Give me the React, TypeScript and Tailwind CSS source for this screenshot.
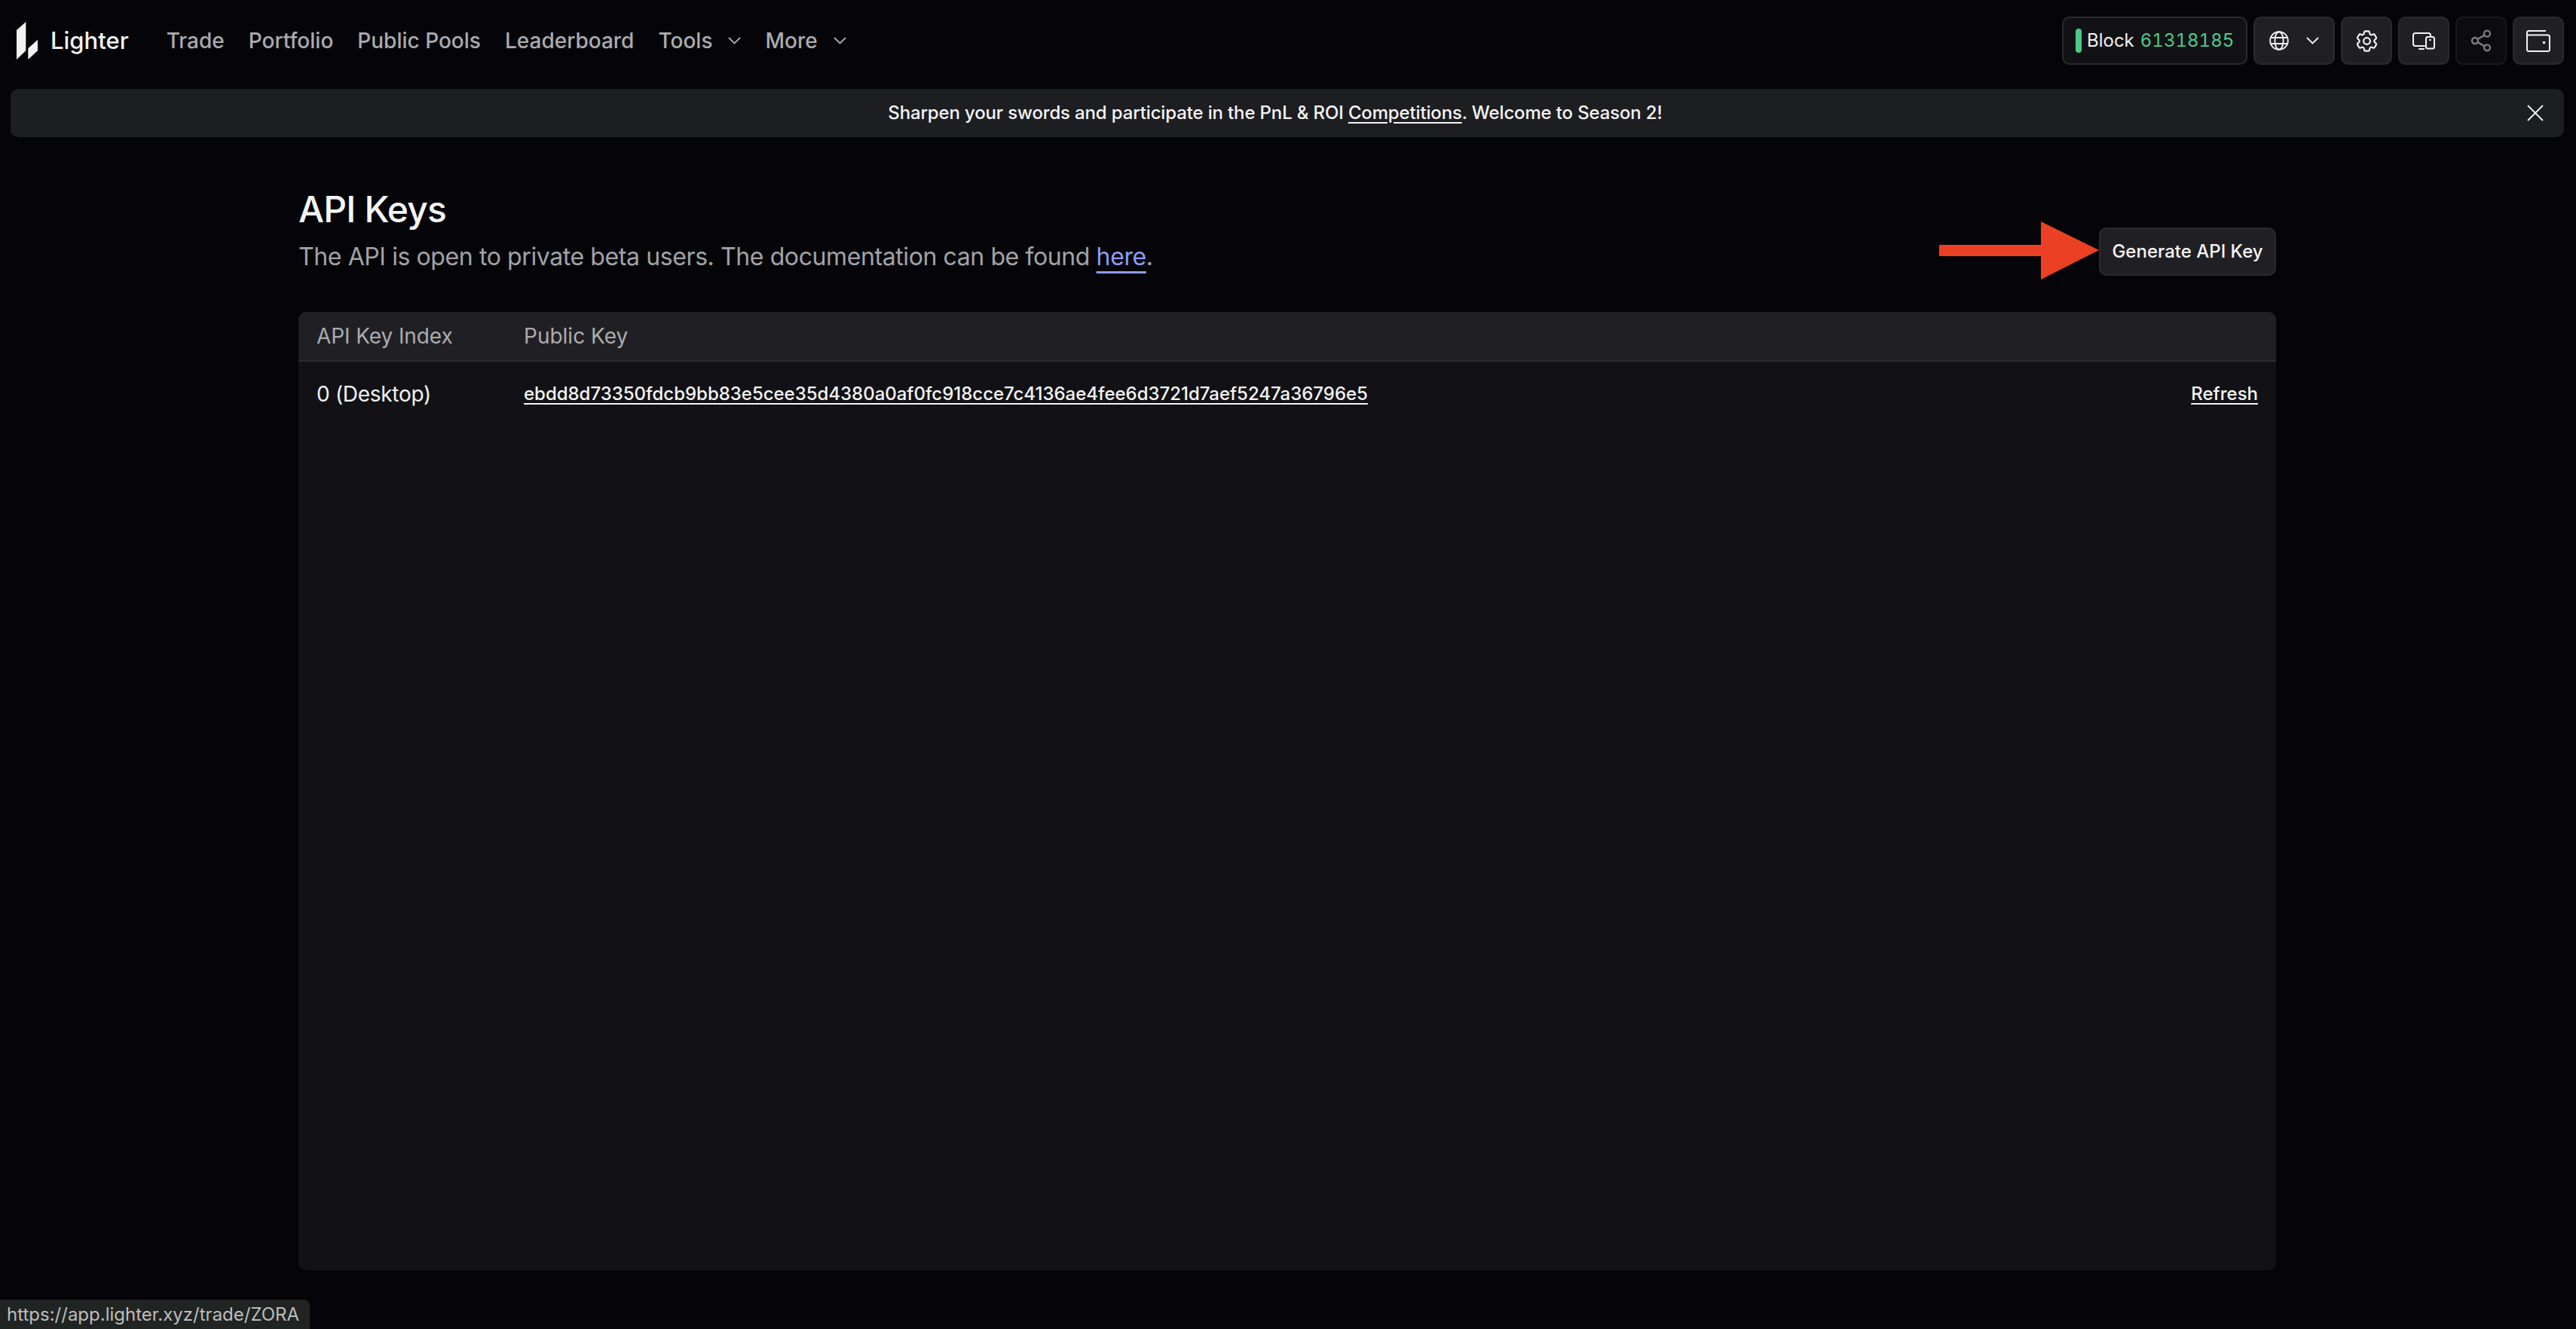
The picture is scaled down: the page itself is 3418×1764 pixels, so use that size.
import React from 'react'
import { Share2 } from 'lucide-react'
import { HiOutlineCog6Tooth } from 'react-icons/hi2'

function Logo() {
  return (
    <svg width="28" height="50" viewBox="0 0 28 50" fill="#f2f2f2">
      <polygon points="0,11 12.3,0 12.3,38.3 0,50" />
      <polygon points="15.3,35.3 28,23.7 28,38.3 15.3,50" />
    </svg>
  )
}

function Chevron({ className }: { className?: string }) {
  return (
    <svg width="17" height="10" viewBox="0 0 17 10" fill="none" stroke="currentColor" strokeWidth="1.8" className={className}>
      <path d="M1 1l7.5 7.5L16 1" />
    </svg>
  )
}

function NavLink({ label, menu }: { label: string; menu?: boolean }) {
  return (
    <a className="flex items-center gap-[21px] text-[28px] leading-10 font-medium text-[#ababaf]">
      {label}
      {menu && <Chevron />}
    </a>
  )
}

function IconButton({ children, dim }: { children: React.ReactNode; dim?: boolean }) {
  return (
    <button className={`flex h-16 w-[68px] items-center justify-center rounded-[10px] border-2 ${dim ? 'border-[#1a1a1e] bg-[#0c0c10]' : 'border-[#2a2a2f] bg-[#202024]'}`}>
      {children}
    </button>
  )
}

function Header() {
  return (
    <header className="flex h-16 items-center justify-between pl-[22px] pr-4">
      <div className="flex items-center">
        <Logo />
        <span className="ml-[17px] text-[31px] leading-10 font-medium text-[#f2f2f2]">Lighter</span>
        <nav className="ml-[50px] flex items-center gap-[32px]">
          <NavLink label="Trade" />
          <NavLink label="Portfolio" />
          <NavLink label="Public Pools" />
          <NavLink label="Leaderboard" />
          <NavLink label="Tools" menu />
          <NavLink label="More" menu />
        </nav>
      </div>
      <div className="flex items-center gap-2">
        <div className="flex h-16 w-[246px] items-center rounded-[10px] border-2 border-[#2a2a2f] bg-[#121216] pl-4">
          <span className="h-8 w-2 rounded-full bg-[#4fc98a]" />
          <span className="ml-[7px] text-2xl text-[#f2f2f2]">Block</span>
          <span className="ml-2 text-2xl text-[#4fc98a] tabular-nums">61318185</span>
        </div>
        <button className="flex h-16 w-[108px] items-center rounded-[10px] border-2 border-[#2a2a2f] bg-[#202024] pl-[19px] text-[#f2f2f2]">
          <svg width="26" height="26" viewBox="0 0 26 26" fill="none" stroke="currentColor" strokeWidth="1.9">
            <circle cx="13" cy="13" r="11.8" />
            <ellipse cx="13" cy="13" rx="5.6" ry="11.8" />
            <path d="M2.5 9h21M2.5 17h21" />
          </svg>
          <Chevron className="ml-[23px]" />
        </button>
        <IconButton>
          <HiOutlineCog6Tooth size={35} color="#f2f2f2" />
        </IconButton>
        <IconButton>
          <svg width="30" height="23" viewBox="0 0 30 23" fill="none" stroke="#f2f2f2" strokeWidth="2" strokeLinecap="round">
            <path d="M24 5V4a3 3 0 0 0-3-3H4a3 3 0 0 0-3 3v11a3 3 0 0 0 3 3h12" />
            <rect x="18" y="6" width="11" height="15.5" rx="2.5" />
            <path d="M9 22h6M23 10h1" />
          </svg>
        </IconButton>
        <IconButton dim>
          <Share2 size={32} strokeWidth={1.75} color="#808084" />
        </IconButton>
        <IconButton>
          <svg width="32" height="29" viewBox="0 0 32 29" fill="none" stroke="#f2f2f2" strokeWidth="2">
            <path d="M1 8V3.5Q1 1 3.5 1H26" />
            <rect x="1" y="6.5" width="30" height="21.5" rx="2.5" />
            <circle cx="23.5" cy="16.5" r="1.8" fill="#f2f2f2" stroke="none" />
          </svg>
        </IconButton>
      </div>
    </header>
  )
}

function Banner() {
  return (
    <div className="mt-8 ml-[14px] mr-4 flex h-16 items-center rounded-[10px] bg-[#1d1e22] pr-[22px]">
      <p className="flex-1 pl-[22px] text-center text-2xl font-medium tracking-[-0.15px] text-[#f5f5f5]">
        Sharpen your swords and participate in the PnL &amp; ROI <a className="underline underline-offset-4">Competitions</a>. Welcome to Season 2!
      </p>
      <svg width="32" height="32" viewBox="0 0 32 32" fill="none" stroke="#f2f2f2" strokeWidth="1.8">
        <path d="M6 6l20 20M26 6L6 26" />
      </svg>
    </div>
  )
}

function ArrowToButton() {
  return (
    <svg width="212" height="77" viewBox="0 0 212 77" className="absolute right-full top-[-8px]" fill="#eb4024">
      <path d="M0 31H135V0L212 38L135 77V46H0z" />
    </svg>
  )
}

function KeysTable() {
  return (
    <div className="mt-12 h-[1272px] overflow-hidden rounded-[10px] bg-[#121216]">
      <div className="flex h-[66px] items-center border-b-2 border-[#2a2a2f] bg-[#202024] px-6 text-[28px] leading-10 text-[#ababaf]">
        <span className="w-[275px] tracking-[-0.1px]">API Key Index</span>
        <span>Public Key</span>
      </div>
      <div className="flex h-[86px] items-center px-6">
        <span className="w-[275px] text-[28px] leading-10 tracking-[-0.3px] text-[#f2f2f2]">0 (Desktop)</span>
        <a className="text-2xl font-medium tracking-[-0.02px] text-[#f5f5f5] underline underline-offset-4">ebdd8d73350fdcb9bb83e5cee35d4380a0af0fc918cce7c4136ae4fee6d3721d7aef5247a36796e5</a>
        <a className="ml-auto text-2xl font-medium text-[#f5f5f5] underline underline-offset-4">Refresh</a>
      </div>
    </div>
  )
}

export default function App() {
  return (
    <div className="relative h-screen overflow-hidden bg-[#050509] pt-[22px] font-[family-name:Inter,sans-serif]">
      <Header />
      <Banner />
      <main className="ml-[396px] mt-16 w-[2624px]">
        <div className="flex items-end justify-between">
          <div className="pb-[5px]">
            <h1 className="text-5xl leading-16 font-medium tracking-[-0.8px] text-[#f5f5f5]">API Keys</h1>
            <p className="mt-[11px] text-[32px] leading-10 tracking-[-0.4px] text-[#a3a3a7]">
              The API is open to private beta users. The documentation can be found <a className="text-[#8d9cf0] underline underline-offset-8">here</a>.
            </p>
          </div>
          <div className="relative">
            <ArrowToButton />
            <button className="flex h-16 w-[235px] items-center justify-center rounded-[10px] border-2 border-[#2a2a2f] bg-[#202024] text-2xl font-medium text-[#f5f5f5]">
              Generate API Key
            </button>
          </div>
        </div>
        <KeysTable />
      </main>
      <div className="absolute bottom-0 left-0 flex h-[39px] w-[411px] items-center rounded-tr-lg bg-[#202423] pl-[9px] text-2xl text-[#bdbdbd]">
        https://app.lighter.xyz/trade/ZORA
      </div>
    </div>
  )
}
